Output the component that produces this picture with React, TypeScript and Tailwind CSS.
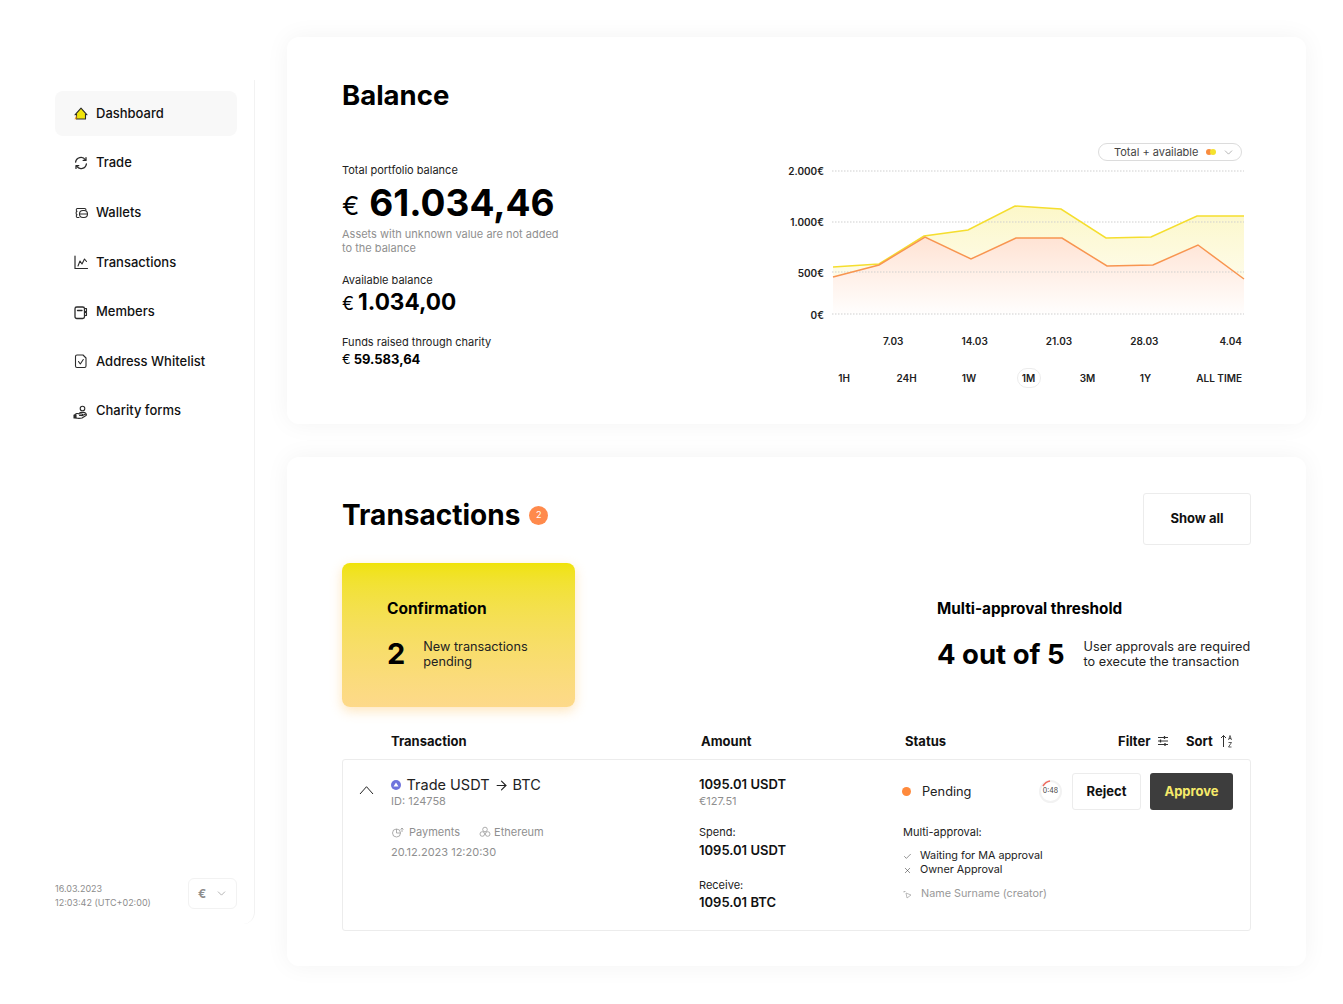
import { ChevronDown, ArrowRight, Check, X } from "lucide-react";

const font = { fontFamily: "Inter, 'Noto Sans', sans-serif" };

// sidebar icons are small line drawings, 16px box
function NavIcon({ name }: { name: string }) {
  const common = {
    width: 16,
    height: 16,
    viewBox: "0 0 16 16",
    fill: "none",
    stroke: "#2b2b2b",
    strokeWidth: 1.1,
    strokeLinecap: "round" as const,
    strokeLinejoin: "round" as const,
  };
  if (name === "home")
    return (
      <svg {...common}>
        <path d="M3.500 13H12.500V8.300L14 8.800 8 2.200 2 8.800 3.500 8.300z" fill="#f0e30a" />
        <path d="M1.500 13.300 3.500 9v4.300z" fill="#f4a020" stroke="none" />
      </svg>
    );
  if (name === "trade")
    return (
      <svg {...common}>
        <path d="M2.600 7.200A5.400 5.400 0 0 1 12.400 4.800" strokeWidth={1.3} />
        <path d="M13.400 8.800A5.400 5.400 0 0 1 3.600 11.200" strokeWidth={1.3} />
        <path d="M13 2.600v2.800h-2.800M3 13.400v-2.800h2.800" strokeWidth={1.3} />
      </svg>
    );
  if (name === "wallet")
    return (
      <svg {...common}>
        <path d="M6 3.500H4.300C3 3.500 3 6 4 6.300 2.800 6.800 2.800 9.200 4 9.700 3 10 3 12.500 4.300 12.500H6" />
        <rect x="6.500" y="5.500" width="8" height="7" rx="3.500" />
        <path d="M6.500 9h8M6 3.500h5.500c1 0 1.500.5 1.500 1.500" />
      </svg>
    );
  if (name === "chart")
    return (
      <svg {...common}>
        <path d="M2 2v12.500h12.500" strokeWidth={1.2} />
        <path d="M5 12l2-5 2 3 2.500-5 2 2.500" />
      </svg>
    );
  if (name === "members")
    return (
      <svg {...common}>
        <rect x="2" y="3" width="9.500" height="11.500" rx="1.800" strokeWidth={1.3} />
        <path d="M4.500 6.500h4.500" strokeWidth={1.3} />
        <path d="M11.500 4.500h2v3h-2M11.500 8.500h2v3h-2" />
      </svg>
    );
  if (name === "check")
    return (
      <svg {...common}>
        <path d="M4 2h6l3 3v8a1.500 1.500 0 0 1-1.500 1.500h-7.500A1.500 1.500 0 0 1 2.500 13V3.500A1.500 1.500 0 0 1 4 2z" />
        <path d="M5.500 8.500l1.800 2.500 3-4.500" />
      </svg>
    );
  return (
    <svg {...common}>
      <circle cx="9.500" cy="5.500" r="2.300" />
      <path d="M6 10.500c1-1.500 6-1.500 7 0" />
      <path d="M1.500 12.500c1-2 3-2.500 5-1.500h2c1.500 0 1.500 1.500 0 1.500h-2" />
      <path d="M3 15c2 .5 4 .5 6 0l4-2.500c1-.8 0-1.800-1-1.200l-3 1.500" />
      <rect x="1" y="12" width="2" height="3" fill="#2b2b2b" />
    </svg>
  );
}

const navItems = [
  { label: "Dashboard", icon: "home", active: true },
  { label: "Trade", icon: "trade" },
  { label: "Wallets", icon: "wallet" },
  { label: "Transactions", icon: "chart" },
  { label: "Members", icon: "members" },
  { label: "Address Whitelist", icon: "check" },
  { label: "Charity forms", icon: "charity" },
];

function Sidebar() {
  return (
    <aside className="mt-[80px] flex h-[844px] w-[255px] shrink-0 flex-col justify-between rounded-br-xl border-r border-[#f2f2f2] pt-[11px] pr-[17px] pb-[15px] pl-[55px]">
      <nav className="flex flex-col gap-[4.6px]">
        {navItems.map((item) => (
          <a
            key={item.label}
            className={`flex h-[45px] items-center gap-[7px] rounded-lg pl-[18px] text-[13px] font-medium text-[#111] ${
              item.active ? "bg-[#f8f8f8]" : ""
            }`}
          >
            <NavIcon name={item.icon} />
            <span>{item.label}</span>
          </a>
        ))}
      </nav>
      <div className="flex items-end justify-between">
        <div className="mb-[-1px] text-[9px] leading-[14px] text-[#8d8d8d]">
          <div>16.03.2023</div>
          <div>12:03:42 (UTC+02:00)</div>
        </div>
        <div className="flex h-[31px] w-[49px] items-center justify-between rounded-md border border-[#f2f2f2] pr-[8px] pl-[9px] text-[12px] font-bold text-[#8d8d8d]">
          <span>€</span>
          <ChevronDown size={13} strokeWidth={1.2} />
        </div>
      </div>
    </aside>
  );
}

const yellowPts: [number, number][] = [
  [3, 102], [49, 99], [94, 71], [138, 65], [185, 41], [231, 44], [276, 73], [321, 72], [367, 51], [414, 51],
];
const orangePts: [number, number][] = [
  [3, 112], [49, 100], [95, 72], [141, 94], [186, 73], [232, 73], [277, 101], [323, 100], [368, 80], [414, 114],
];
const toLine = (pts: [number, number][]) => pts.map((p) => p.join(",")).join(" ");
const toArea = (pts: [number, number][]) => `M3,149 L${toLine(pts).replace(/ /g, " L")} L414,149 Z`;

function BalanceChart() {
  return (
    <svg width="415" height="155" viewBox="0 0 415 155" className="block">
      <defs>
        <linearGradient id="yellowFill" x1="0" y1="0" x2="0" y2="1">
          <stop offset="0" stopColor="#f5e44a" stopOpacity="0.3" />
          <stop offset="0.75" stopColor="#f5e44a" stopOpacity="0.1" />
          <stop offset="1" stopColor="#f5e44a" stopOpacity="0" />
        </linearGradient>
        <linearGradient id="orangeFill" x1="0" y1="0" x2="0" y2="1">
          <stop offset="0" stopColor="#ff8a4a" stopOpacity="0.24" />
          <stop offset="1" stopColor="#ff8a4a" stopOpacity="0.01" />
        </linearGradient>
      </defs>
      <path d={toArea(yellowPts)} fill="url(#yellowFill)" />
      <path d={toArea(orangePts)} fill="#fff" />
      <path d={toArea(orangePts)} fill="url(#orangeFill)" />
      {[6, 57, 107, 149].map((y) => (
        <line key={y} x1="2" x2="414" y1={y} y2={y} stroke="#cfcfcf" strokeWidth="1" strokeDasharray="1.500 1.500" />
      ))}
      <polyline points={toLine(yellowPts)} fill="none" stroke="#f5de2e" strokeWidth="1.500" />
      <polyline points={toLine(orangePts)} fill="none" stroke="#f89550" strokeWidth="1.500" />
    </svg>
  );
}

function BalanceCard() {
  return (
    <section className="flex h-[387px] flex-col rounded-xl bg-white pt-[40px] pl-[55px] shadow-[0_0_24px_rgba(0,0,0,0.05)]">
      <h1 className="text-[27.5px] leading-[36px] font-bold text-black">Balance</h1>
      <div className="flex">
        <div className="w-[440px] shrink-0 pt-[50px] text-[#222]">
          <p className="text-[11px] leading-[14px]">Total portfolio balance</p>
          <p className="mt-[6px] flex h-[40px] items-center font-bold text-black">
            <span className="mt-[4px] mr-[10px] text-[26px] font-normal">€</span>
            <span className="text-[37px]">61.034,46</span>
          </p>
          <p className="mt-[4px] w-[220px] text-[11px] leading-[14px] text-[#8f8f8f]">
            Assets with unknown value are not added to the balance
          </p>
          <p className="mt-[18px] text-[11px] leading-[14px]">Available balance</p>
          <p className="mt-[1px] flex h-[28px] items-center font-bold text-black">
            <span className="mt-[2px] mr-[4px] text-[18px] font-normal">€</span>
            <span className="text-[22.6px]">1.034,00</span>
          </p>
          <p className="mt-[19px] text-[11px] leading-[14px]">Funds raised through charity</p>
          <p className="mt-[2px] flex h-[18px] items-center text-[13px] font-bold text-black">
            <span className="mr-[3px] font-normal">€</span>
            <span>59.583,64</span>
          </p>
        </div>
        <div className="flex-1 pt-[30px] pr-[64px]">
          <div className="mr-[3px] flex justify-end">
            <div className="flex h-[18px] w-[144px] items-center rounded-full border border-[#dcdcdc] pr-[6px] pl-[15px] text-[11px] text-[#444]">
              <span>Total + available</span>
              <span className="ml-[8px] flex">
                <span className="h-[6px] w-[6px] rounded-full bg-[#f98c3f]" />
                <span className="ml-[-2px] h-[6px] w-[6px] rounded-full bg-[#f5e22e]" />
              </span>
              <ChevronDown size={13} strokeWidth={1} className="ml-auto text-[#777]" />
            </div>
          </div>
          <div className="mt-[4px] flex">
            <div className="w-[48px] shrink-0 pr-[6px] text-right text-[10px] leading-[12px] font-semibold text-[#222]">
              <div className="h-[51px]">2.000€</div>
              <div className="h-[51px]">1.000€</div>
              <div className="h-[42px]">500€</div>
              <div>0€</div>
            </div>
            <BalanceChart />
          </div>
          <div className="mt-[13px] ml-[101px] flex h-[14px] w-[359px] justify-between text-[10px] leading-[14px] font-semibold text-[#222]">
            <span>7.03</span>
            <span>14.03</span>
            <span>21.03</span>
            <span className="mr-[3px]">28.03</span>
            <span>4.04</span>
          </div>
          <div className="mt-[20px] ml-[32px] flex items-center text-center text-[10px] leading-[14px] font-semibold text-[#222]">
            <span className="w-[60px]">1H</span>
            <span className="w-[65px]">24H</span>
            <span className="w-[60px]">1W</span>
            <span className="flex w-[59px] justify-center">
              <span className="flex h-[20px] w-[24px] items-center justify-center rounded-full border border-[#ececec]">1M</span>
            </span>
            <span className="w-[59px]">3M</span>
            <span className="w-[57px]">1Y</span>
            <span className="w-[68px] text-right">ALL TIME</span>
          </div>
        </div>
      </div>
    </section>
  );
}

function TransactionsCard() {
  return (
    <section className="flex h-[509px] flex-col rounded-xl bg-white pt-[36px] pr-[55px] pl-[55px] shadow-[0_0_24px_rgba(0,0,0,0.05)]">
      <div className="flex items-start justify-between">
        <div className="mt-[4px] flex items-center gap-[9px]">
          <h2 className="text-[28px] leading-[36px] font-bold text-black">Transactions</h2>
          <span className="flex h-[19px] w-[19px] items-center justify-center rounded-full bg-[#ff8a4c] text-[9px] text-white">2</span>
        </div>
        <button className="h-[52px] w-[108px] rounded-[3px] border border-[#ececec] bg-white text-[13px] font-bold text-[#111]">
          Show all
        </button>
      </div>
      <div className="mt-[18px] flex justify-between">
        <div className="flex h-[144px] w-[233px] flex-col rounded-lg bg-gradient-to-b from-[#f0e305] to-[#fdd98a] pt-[36px] pl-[45px] shadow-[0_4px_12px_rgba(253,200,110,0.45)]">
          <h3 className="text-[15.5px] leading-[20px] font-bold text-black">Confirmation</h3>
          <div className="mt-[18px] flex items-center gap-[18px]">
            <span className="text-[29px] leading-[34px] font-bold text-black">2</span>
            <span className="w-[120px] text-[12.7px] leading-[15px] text-[#222]">New transactions pending</span>
          </div>
        </div>
        <div className="w-[314px] pt-[36px]">
          <h3 className="text-[15.3px] leading-[20px] font-bold text-black">Multi-approval threshold</h3>
          <div className="mt-[18px] flex items-center gap-[19px]">
            <span className="text-[27.5px] leading-[34px] font-bold whitespace-nowrap text-black">4 out of 5</span>
            <span className="text-[12.7px] leading-[15px] whitespace-nowrap text-[#222]">
              User approvals are required
              <br />
              to execute the transaction
            </span>
          </div>
        </div>
      </div>
      <div className="mt-[25px] flex h-[18px] items-center pl-[49px] text-[13px] leading-[18px] font-bold text-[#111]">
        <span className="w-[310px]">Transaction</span>
        <span className="w-[204px]">Amount</span>
        <span className="w-[213px]">Status</span>
        <span className="flex items-center gap-[6px]">
          Filter
          <svg width="12" height="12" viewBox="0 0 12 12" fill="none" stroke="#333" strokeWidth="1">
            <path d="M1 2.500h10M1 6h10M1 9.500h10" />
            <path d="M7.500 1v3M3.500 4.500v3M8 8v3" strokeWidth="1.300" />
          </svg>
        </span>
        <span className="ml-[17.5px] flex items-center gap-[7px]">
          Sort
          <svg width="13" height="14" viewBox="0 0 13 14" fill="none" stroke="#333" strokeWidth="1">
            <path d="M3.500 13V1.500M1 4l2.500-2.500L6 4" />
            <path d="M8.500 6l1.500-4.500L11.500 6M9 4.500h2M8.500 8.500h3l-3 4.500h3" strokeWidth="0.800" />
          </svg>
        </span>
      </div>
      <div className="mt-[9px] flex h-[172px] rounded-[3px] border border-[#ececec] pt-[13px] pl-[16px]">
        <div className="flex w-[340px] shrink-0 pt-[3px]">
          <svg width="16" height="16" viewBox="0 0 16 16" fill="none" stroke="#222" strokeWidth="1" className="mt-[6px] mr-[16px]">
            <path d="M1 12 7.500 4.700 14 12" />
          </svg>
          <div>
            <div className="flex items-center text-[14.5px] leading-[18px] text-[#222]">
              <svg width="10" height="10" viewBox="0 0 10 10" className="mr-[5.500px]">
                <circle cx="5" cy="5" r="5" fill="#6f74dd" />
                <path d="M5 2.500 7.500 6.500h-5z" fill="#fff" />
              </svg>
              Trade USDT
              <ArrowRight size={15} strokeWidth={1.800} className="mx-[4px]" />
              BTC
            </div>
            <div className="text-[11px] leading-[14px] text-[#8f8f8f]">ID: 124758</div>
            <div className="mt-[17px] flex items-center text-[11px] leading-[14px] text-[#8f8f8f]">
              <svg width="14" height="12" viewBox="0 0 14 12" fill="none" stroke="#999" strokeWidth="0.800" className="mr-[4px]">
                <circle cx="5.500" cy="7" r="4" />
                <path d="M5.500 3v4h4M11 6V2M9.500 3.500 11 2l1.500 1.500" />
              </svg>
              Payments
              <svg width="12" height="12" viewBox="0 0 12 12" fill="none" stroke="#999" strokeWidth="0.800" className="mr-[3px] ml-[19px]">
                <circle cx="6" cy="3.500" r="2.300" />
                <circle cx="3.300" cy="8" r="2.300" />
                <circle cx="8.700" cy="8" r="2.300" />
              </svg>
              Ethereum
            </div>
            <div className="mt-[6px] text-[11px] leading-[14px] text-[#8f8f8f]">20.12.2023 12:20:30</div>
          </div>
        </div>
        <div className="w-[204px] shrink-0 pt-[2px] text-[13px] text-[#222]">
          <div className="leading-[18px] font-semibold text-[#111]">1095.01 USDT</div>
          <div className="mt-[1px] text-[11px] leading-[14px] text-[#8f8f8f]">€127.51</div>
          <div className="mt-[17px] text-[11px] leading-[14px]">Spend:</div>
          <div className="mt-[2px] leading-[18px] font-semibold text-[#111]">1095.01 USDT</div>
          <div className="mt-[19px] text-[11px] leading-[14px]">Receive:</div>
          <div className="mt-[1px] leading-[18px] font-semibold text-[#111]">1095.01 BTC</div>
        </div>
        <div className="flex-1 pr-[17px]">
          <div className="flex h-[37px] items-center text-[12.8px] text-[#222]">
            <span className="ml-[-1px] h-[9px] w-[9px] rounded-full bg-[#ff8a3c]" />
            <span className="ml-[11px]">Pending</span>
            <span className="relative ml-auto flex h-[23px] w-[23px] items-center justify-center rounded-full border-2 border-[#f2f2f2] text-[7px] text-[#444]">
              0:48
              <svg width="23" height="23" viewBox="0 0 23 23" fill="none" className="absolute top-[-2px] left-[-2px]">
                <path d="M4 6A10.500 10.500 0 0 1 11 1" stroke="#ef6a5e" strokeWidth="1.500" />
              </svg>
            </span>
            <button className="ml-[10px] h-[37px] w-[69px] rounded-[3px] border border-[#ececec] bg-white text-[13px] font-bold text-[#111]">
              Reject
            </button>
            <button className="ml-[9px] h-[37px] w-[83px] rounded-[3px] bg-[#3d3d3d] text-[13px] font-bold text-[#f6ea6a]">
              Approve
            </button>
          </div>
          <div className="mt-[15px] text-[11px] leading-[14px] text-[#222]">Multi-approval:</div>
          <div className="mt-[10px] flex items-center text-[10.8px] leading-[14px] text-[#222]">
            <Check size={9} strokeWidth={1.300} className="mr-[8px]" />
            Waiting for MA approval
          </div>
          <div className="flex items-center text-[10.8px] leading-[14px] text-[#222]">
            <X size={9} strokeWidth={1.300} className="mr-[8px]" />
            Owner Approval
          </div>
          <div className="mt-[10px] flex items-center text-[10.8px] leading-[14px] text-[#999]">
            <svg width="9" height="9" viewBox="0 0 9 9" fill="none" stroke="#aaa" strokeWidth="0.800" className="mr-[9px]">
              <path d="M3 3l5 2-4 3zM1 1.500h1.500M1 1v1.500" />
            </svg>
            Name Surname (creator)
          </div>
        </div>
      </div>
    </section>
  );
}

export default function App() {
  return (
    <div className="flex h-[1004px] w-[1343px] overflow-hidden bg-white" style={font}>
      <Sidebar />
      <main className="mt-[37px] ml-[32px] flex w-[1019px] shrink-0 flex-col gap-[33px]">
        <BalanceCard />
        <TransactionsCard />
      </main>
    </div>
  );
}
